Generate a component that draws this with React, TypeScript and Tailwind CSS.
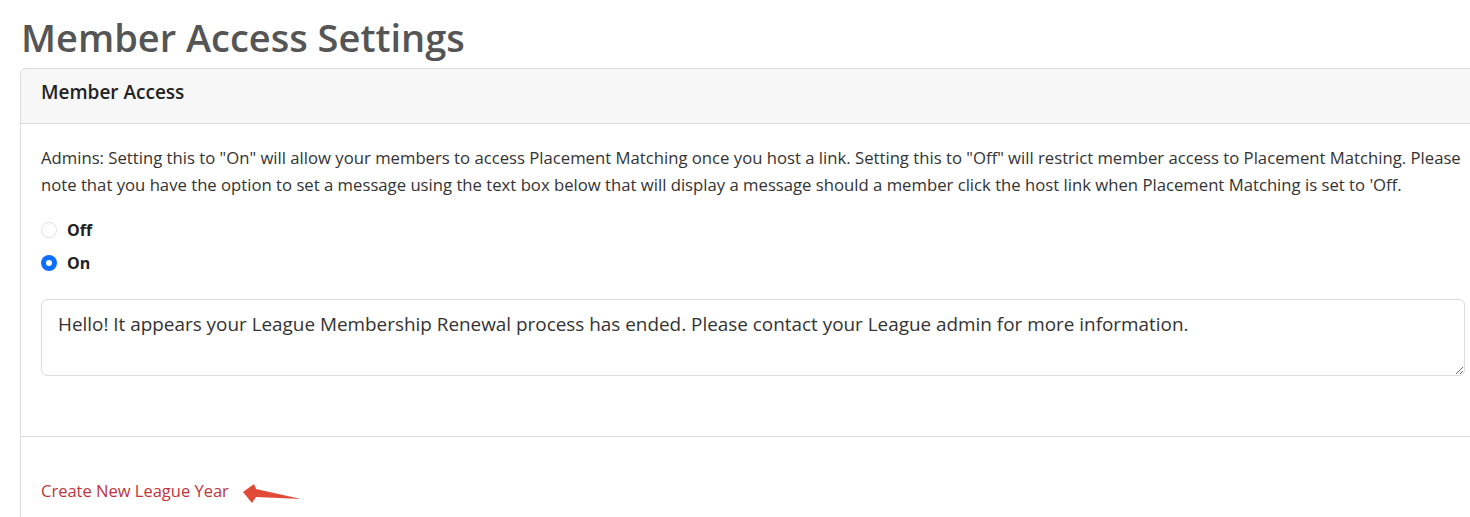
import React from 'react';

const font = { fontFamily: '"Open Sans", "Noto Sans", sans-serif' };

export default function App() {
  return (
    <div className="w-[1470px] h-[517px] overflow-hidden bg-white" style={font}>
      <div className="pl-5 w-[1490px]">
        <h1 className="pl-px pt-[13px] text-[38px] leading-[48px] font-semibold text-[#555]">
          Member Access Settings
        </h1>
        <div className="mt-[7px] border border-[#dcdcdc] rounded-md">
          <div className="h-[55px] bg-[#f7f7f7] border-b border-[#dcdcdc] rounded-t-md px-5 pb-[7px] flex items-center">
            <span className="text-[19px] text-[#222] font-semibold">Member Access</span>
          </div>
          <div className="px-5 pt-[20px] pb-[60px] border-b border-[#dcdcdc]">
            <p className="w-[1440px] text-[16.7px] leading-[27px] text-[#333]">
              Admins: Setting this to "On" will allow your members to access Placement Matching once you host a link. Setting this to "Off" will restrict member access to Placement Matching. Please note that you have the option to set a message using the text box below that will display a message should a member click the host link when Placement Matching is set to 'Off.
            </p>
            <div className="mt-[20px] flex flex-col gap-[9px]">
              <label className="flex items-center gap-[10px] text-[16px] font-bold text-[#222]">
                <span className="w-4 h-4 rounded-full border border-[#dee2e6] bg-white" />
                Off
              </label>
              <label className="flex items-center gap-[10px] text-[16px] font-bold text-[#222]">
                <span className="w-4 h-4 rounded-full bg-[#0d6efd] flex items-center justify-center">
                  <span className="w-[6px] h-[6px] rounded-full bg-white" />
                </span>
                On
              </label>
            </div>
            <textarea
              className="mt-[24px] block w-[1424px] h-[77px] border border-[#dcdcdc] rounded-md px-4 pt-[10px] text-[18.9px] leading-[28px] text-[#333] resize-y outline-none"
              style={font}
              defaultValue="Hello! It appears your League Membership Renewal process has ended. Please contact your League admin for more information."
            />
          </div>
          <div className="px-5 pt-[39px] pb-8 flex items-center">
            <a className="text-[16.5px] text-[#c0343a]" href="#">Create New League Year</a>
            <svg width="64" height="26" viewBox="0 0 64 26" className="ml-[11px] mt-[4px]">
              <path d="M3 12 L14 4 L16 9 L61 19 L16 17 L12 23 Z" fill="#e04a37" />
            </svg>
          </div>
        </div>
      </div>
    </div>
  );
}
